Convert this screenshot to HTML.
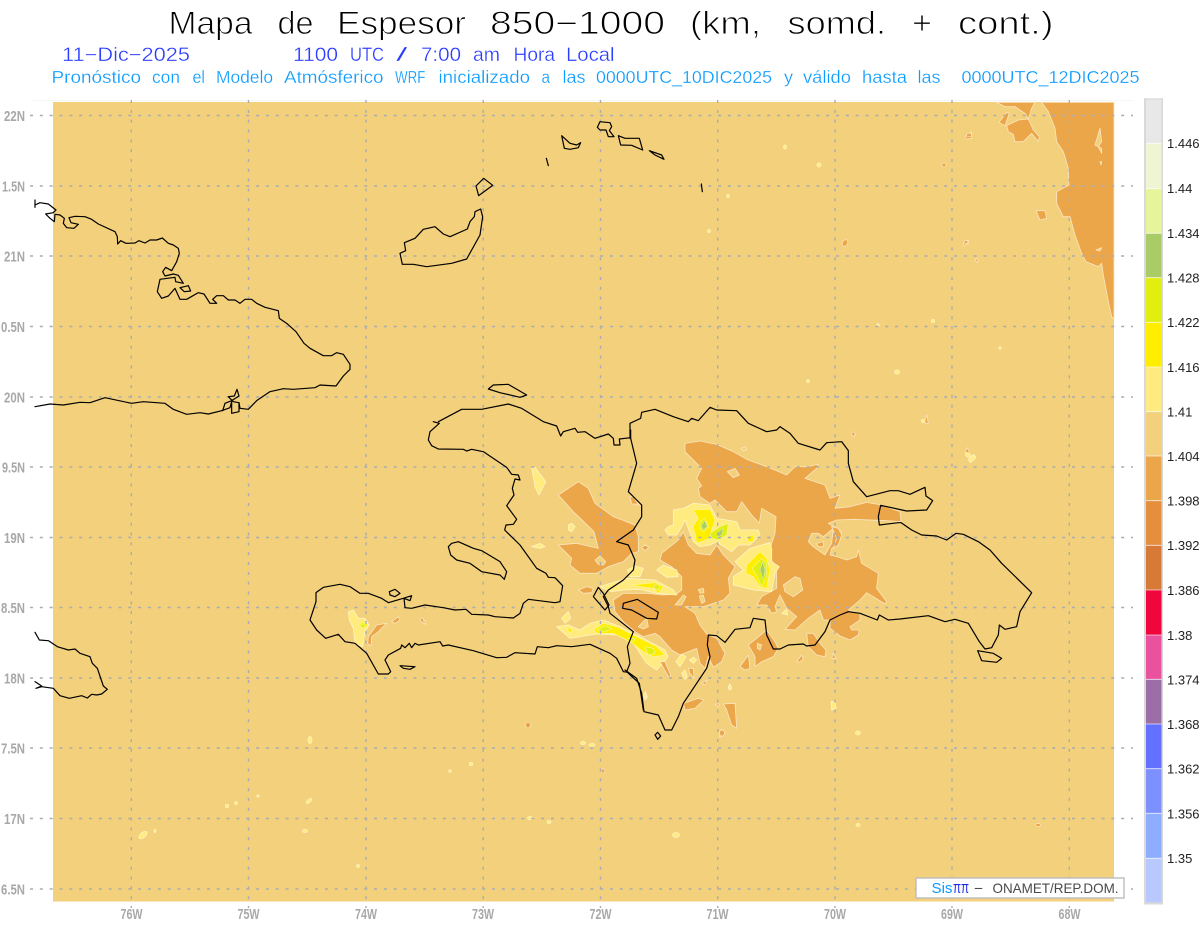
<!DOCTYPE html>
<html lang="es">
<head>
<meta charset="utf-8">
<title>Mapa de Espesor 850-1000</title>
<style>
html,body{margin:0;padding:0;background:#fff;width:1200px;height:927px;overflow:hidden}
svg{display:block;font-family:"Liberation Sans",sans-serif}
.t{font-size:32px;fill:#000;stroke:#fff;stroke-width:.9}
.d{font-size:19px;fill:#2a3cff;stroke:#fff;stroke-width:.3}
.p{font-size:17.5px;fill:#0a9bff;stroke:#fff;stroke-width:.25}
.a{font-size:15px;font-weight:bold;fill:#a8a8a8}
.c{font-size:13px;fill:#222}
.o{fill:#eca64a;stroke:#fbe6c0;stroke-width:2.4;stroke-linejoin:round}
.b{fill:#f3d07b;stroke:#fbe6c0;stroke-width:2.4;stroke-linejoin:round}
.l{fill:#ffeb80;stroke:#fff5c8;stroke-width:2.4;stroke-linejoin:round}
.y{fill:#ffee00;stroke:#fff5a0;stroke-width:1.8;stroke-linejoin:round}
.g{fill:#e0ee10;stroke:#f4f8a0;stroke-width:1.8;stroke-linejoin:round}
.v{fill:#aacc66;stroke:#e8f0b0;stroke-width:1.5;stroke-linejoin:round}
.k{fill:none;stroke:#000;stroke-width:3.6;stroke-linejoin:round;stroke-linecap:round}
.m{stroke:#a9acb0;stroke-width:1.4;stroke-dasharray:3 6.83;fill:none}
</style>
</head>
<body>
<svg width="1200" height="927" viewBox="0 0 1200 927" xmlns="http://www.w3.org/2000/svg">
<rect width="1200" height="927" fill="#fff"/>
<line x1="33" y1="100.5" x2="1133" y2="100.5" stroke="#f5f5f5"/>
<rect x="53" y="102" width="1061" height="799" fill="#f3d07b"/>
<rect x="53" y="901" width="1061" height="1" fill="#fbe6c0"/>

<!-- zoom 10 NE -->
<g transform="translate(960,95) scale(.33333)">
<polygon class="o" points="245,22 265,50 285,100 290,140 310,170 325,220 327,270 290,290 290,325 310,365 330,365 345,420 365,475 378,500 415,515 425,505 430,540 445,620 455,665 462,672 462,22"/>
<polygon class="o" points="110,22 135,35 165,35 195,55 205,72 215,40 225,22"/>
<polygon class="o" points="205,72 220,105 238,125 235,140 215,115 190,140 165,140 160,118 145,110 140,92 175,75"/>
<polygon class="o" points="117,82 140,52 148,55 135,92"/>
<polygon class="b" points="405,150 420,100 425,140 415,155"/>
<polygon class="b" points="415,155 425,160 425,175"/>
<polygon class="b" points="420,200 425,200 423,210"/>
<polygon class="b" points="408,465 425,458 420,468"/>
<polygon class="o" points="228,347 255,347 260,370 240,375"/>
<polygon class="o" points="10,445 25,435 25,445 12,452"/>
<polygon class="o" points="15,125 35,110 35,130 20,132"/>
<polygon class="o" points="45,495 50,490 55,497 50,502"/>
</g>

<!-- zoom 9 main DR fills -->
<g transform="translate(620,400) scale(.33333)">
<path class="o" fill-rule="evenodd" d="M195,130 240,123 290,133 340,155 380,178 440,200 500,225 525,200 565,200 595,192 590,205 555,235 600,250 615,255 630,295 660,285 645,325 690,320 740,307 785,315 840,335 843,365 800,362 700,358 650,360 625,370 665,395 655,435 635,445 630,465 650,470 680,480 710,470 715,450 725,490 775,520 770,565 800,605 795,612 760,590 740,578 720,600 685,630 720,640 720,660 690,680 695,690 718,690 715,705 690,720 660,708 630,685 630,660 610,660 600,630 565,655 525,690 495,688 530,650 500,625 480,585 465,620 470,635 455,640 440,615 410,615 425,590 470,565 470,500 445,470 455,430 465,400 468,350 425,325 418,370 395,345 365,305 350,335 320,335 285,300 270,310 240,290 235,265 245,258 230,235 245,205 195,155Z M322,215 345,205 358,225 340,233Z M565,425 575,400 595,400 610,410 640,385 635,430 615,465 580,440Z M490,555 525,530 540,535 548,570 520,590 495,575Z"/>
<polygon class="o" points="590,430 610,425 610,440 595,440"/>
<polygon class="o" points="635,380 655,385 665,405 655,435 640,445 650,415"/>
<polygon class="l" points="485,640 500,628 503,645"/>
<polygon class="o" points="385,735 410,715 440,690 465,725 475,745 460,770 425,785 405,800 405,770"/>
<polygon class="b" points="412,730 425,735 420,750 412,745"/>
<polygon class="o" points="360,800 385,765 390,805 375,810"/>
<polygon class="o" points="560,700 580,700 600,730 618,750 615,770 590,765 565,740"/>
<polygon class="o" points="530,785 545,765 550,778 535,787"/>
<polygon class="o" points="635,775 640,760 648,775"/>
<polygon class="o" points="190,910 235,895 252,900 225,925 195,930"/>
<polygon class="o" points="310,912 345,910 350,985 335,975 320,930"/>
<polygon class="o" points="298,1010 305,987 315,1000 305,1010"/>
<polygon class="o" points="285,912 300,912 295,920"/>
<polygon class="o" points="245,850 262,840 255,855"/>
<polygon class="o" points="915,60 920,45 925,70 915,70"/>
<polygon class="o" points="1035,155 1042,143 1048,155 1042,165"/>
<polygon class="o" points="693,100 700,95 707,103 700,110"/>
<polygon class="o" points="70,442 77,435 85,442 77,450"/>
<polygon class="l" points="1045,180 1060,163 1068,172 1052,188"/>
<polygon class="l" points="633,905 645,905 648,925 635,930"/>
<polygon class="b" points="325,860 330,855 334,868 327,870"/>
<polygon class="b" points="363,145 375,140 380,148 370,153"/>
</g>

<!-- zoom 5 central fills -->
<g transform="translate(540,430) scale(.33333)">
<polygon class="o" points="55,195 115,155 145,175 165,220 220,260 285,285 295,320 295,365 275,370 250,395 205,410 170,430 120,430 90,405 95,385 55,345 110,340 175,355 162,305 100,245"/>
<polygon class="b" points="165,390 180,378 197,395 190,405 175,403"/>
<polygon class="o" points="115,480 140,470 160,475 155,488 130,490"/>
<polygon class="o" points="270,210 275,200 300,225 290,225"/>
<polygon class="o" points="305,352 315,345 327,352 315,362"/>
<polygon class="o" points="365,370 415,330 430,305 445,345 470,370 510,375 530,345 550,375 585,410 565,445 570,490 550,510 520,520 490,530 435,530 465,550 480,585 500,612 530,625 555,670 545,695 520,712 505,680 495,715 480,700 470,655 420,675 395,660 360,620 345,610 310,620 285,605 250,575 225,545 220,510 250,490 320,490 370,495 410,492 425,480 425,440 395,410 360,390"/>
<polygon class="b" points="295,590 320,565 325,590 310,597"/>
<polygon class="b" points="475,478 490,475 492,488 480,490"/>
<polygon class="b" points="478,498 490,495 495,515 485,520"/>
<polygon class="b" points="405,525 430,495 438,500 425,525"/>
<!-- light yellow -->
<polygon class="l" points="375,300 385,290 400,285 400,240 430,235 460,220 510,225 530,265 590,275 600,300 655,300 660,315 630,345 595,345 575,365 545,345 530,335 510,345 480,350 460,335 435,270 425,290 410,315 385,315"/>
<polygon class="y" points="460,240 510,238 525,270 515,300 510,325 470,340 465,310 458,290 475,265"/>
<polygon class="g" points="480,275 495,265 505,290 490,305 480,295"/>
<polygon class="g" points="510,310 540,290 565,280 560,315 535,330 515,325"/>
<polygon class="v" points="484,287 495,272 502,290 490,300"/>
<polygon class="v" points="530,310 550,295 545,315 535,320"/>
<polygon class="y" points="620,320 640,315 640,335 625,335"/>
<polygon class="l" points="585,395 630,355 665,345 690,338 695,355 695,395 718,410 705,430 695,485 640,480 600,470 580,465 580,440 610,420"/>
<polygon class="y" points="620,405 660,365 680,385 690,420 680,475 660,470 640,440 618,430"/>
<polygon class="g" points="637,415 665,385 680,400 680,440 665,470 650,435"/>
<polygon class="v" points="660,420 668,395 675,420 670,450"/>
<polygon class="l" points="180,470 260,445 345,450 400,480 410,495 350,490 300,478 255,480 215,485 190,475"/>
<polygon class="y" points="275,465 345,458 370,470 355,490 340,475 300,470"/>
<polygon class="g" points="342,465 360,465 355,480 345,478"/>
<polygon class="l" points="262,420 285,408 310,415 300,440 270,440"/>
<polygon class="l" points="350,420 370,405 410,420 415,440 380,442"/>
<polygon class="l" points="50,590 85,585 120,600 150,580 190,570 240,590 310,625 375,660 385,680 350,720 320,700 280,640 230,615 170,612 90,625"/>
<polygon class="y" points="160,600 190,580 230,590 280,615 350,650 375,675 340,680 310,665 270,635 220,610 170,610"/>
<polygon class="g" points="170,600 195,588 215,595 195,605"/>
<polygon class="g" points="315,650 340,655 345,670 325,675"/>
<polygon class="g" points="265,625 285,625 280,635"/>
<polygon class="l" points="65,565 85,545 92,565 75,580"/>
<polygon class="y" points="82,597 90,592 96,605 88,608"/>
<polygon class="l" points="408,695 425,672 438,680 420,710"/>
<polygon class="l" points="448,690 460,682 470,690 460,700"/>
<polygon class="l" points="425,730 435,720 442,740 435,748"/>
<polygon class="o" points="445,715 460,715 462,745 450,730"/>
<polygon class="o" points="360,695 375,695 392,735 388,745"/>
<polygon class="l" points="565,770 570,762 575,775 568,780"/>
<polygon class="l" points="312,800 316,785 322,800 316,810"/>
</g>

<!-- zoom 8 Haiti fills -->
<g transform="translate(300,380) scale(.33333)">
<polygon class="l" points="695,262 705,262 737,305 717,345 705,320"/>
<polygon class="l" points="805,435 815,430 825,440 815,455 805,450"/>
<polygon class="l" points="695,500 720,490 735,500 720,505"/>
<polygon class="l" points="145,695 160,690 175,715 195,715 207,735 195,755 188,800 165,790 160,745 148,720"/>
<polygon class="y" points="175,735 190,725 205,735 190,748"/>
<polygon class="g" points="182,735 195,730 195,742 185,745"/>
<polygon class="o" points="205,770 230,735 260,730 235,755 215,770 213,798 203,790"/>
<polygon class="o" points="275,725 295,710 300,720 285,730"/>
<polygon class="o" points="362,715 370,715 378,733 368,728"/>
<polygon class="o" points="990,350 1000,350 1015,372 995,372"/>
<polygon class="l" points="1030,945 1036,935 1040,948 1034,955"/>
</g>

<!-- small specks -->
<g fill="#ffeb80" stroke="#fff5c8" stroke-width=".7">
<ellipse cx="143" cy="835" rx="5" ry="2.6" transform="rotate(-40 143 835)"/>
<ellipse cx="310" cy="740" rx="2" ry="3.5"/>
<ellipse cx="309" cy="801" rx="3.5" ry="1.5" transform="rotate(-40 309 801)"/>
<ellipse cx="305" cy="831" rx="2.5" ry="1.5"/>
<ellipse cx="583" cy="743" rx="2.5" ry="1.7"/>
<ellipse cx="592" cy="745" rx="3" ry="1.5"/>
<ellipse cx="676" cy="835" rx="3.5" ry="2.5"/>
<ellipse cx="858" cy="825" rx="2" ry="1.5"/>
<ellipse cx="858" cy="733" rx="2.5" ry="2"/>
<ellipse cx="968" cy="455" rx="3" ry="2" transform="rotate(40 968 455)"/>
<ellipse cx="897" cy="372" rx="2.5" ry="2"/>
<ellipse cx="358" cy="866" rx="1.5" ry="1.5"/>
<ellipse cx="236" cy="803" rx="1.5" ry="1.5"/>
<ellipse cx="227" cy="806" rx="1.7" ry="1.7"/>
<ellipse cx="258" cy="796" rx="1.2" ry="1.2"/>
<ellipse cx="530" cy="818" rx="2.5" ry="1.5"/>
<ellipse cx="549" cy="822" rx="2" ry="1.5"/>
<ellipse cx="471" cy="764" rx="1.7" ry="1.7"/>
<ellipse cx="450" cy="771" rx="1.3" ry="1.3"/>
<ellipse cx="155" cy="831" rx="1" ry="1.5"/>
<ellipse cx="785" cy="147" rx="1.5" ry="2"/>
<ellipse cx="819" cy="165" rx="2" ry="2"/>
<ellipse cx="728" cy="196" rx="1.5" ry="1.5"/>
<ellipse cx="709" cy="231" rx="1.5" ry="1.5"/>
<ellipse cx="933" cy="321" rx="1.7" ry="1.7"/>
<ellipse cx="878" cy="325" rx="1.3" ry="1.3"/>
<ellipse cx="808" cy="381" rx="1.5" ry="1.5"/>
<ellipse cx="923" cy="421" rx="1.7" ry="1.7"/>
<ellipse cx="1000" cy="348" rx="1.2" ry="1.2"/>
</g>
<g fill="#eca64a" stroke="#fbe6c0" stroke-width=".7">
<ellipse cx="845" cy="243" rx="2.5" ry="3.5" transform="rotate(30 845 243)"/>
<ellipse cx="966" cy="242" rx="1.8" ry="1.5"/>
<ellipse cx="944" cy="165" rx="2" ry="2"/>
<ellipse cx="969" cy="135" rx="2.5" ry="1.7"/>
<ellipse cx="1038" cy="825" rx="2.5" ry="1.5"/>
<ellipse cx="603" cy="771" rx="1.8" ry="2"/>
<ellipse cx="722" cy="733" rx="2.5" ry="3"/>
<ellipse cx="528" cy="725" rx="2.5" ry="3"/>
<ellipse cx="422" cy="620" rx="1.5" ry="2"/>
</g>

<!-- graticule -->
<g class="m">
<path d="M30 115.5H1133M30 186H1133M30 256H1133M30 326.5H1133M30 397H1133M30 467H1133M30 537.5H1133M30 607.5H1133M30 678H1133M30 748H1133M30 818.5H1133M30 889H1133"/>
<path d="M131.3 100V908M248.5 100V908M366 100V908M483.2 100V908M600.5 100V908M717.7 100V908M835 100V908M952 100V908M1069.3 100V908"/>
</g>

<!-- coast: Cuba -->
<g transform="translate(0,90) scale(.33333)">
<polyline class="k" points="105,330 105,352"/>
<polyline class="k" points="105,345 120,338 145,342 168,360 160,368 137,372 150,385 163,395 165,373 180,375 193,385 190,400 200,413 222,415 235,403 213,398 207,383 225,379 255,380 275,388 295,402 345,425 352,440 353,462 362,452 378,460 405,459 417,452 435,459 450,450 470,450 487,444 505,460 520,465 535,475 538,490 530,515 515,542 497,532 488,545 495,558 520,552 535,556 550,580 527,575 525,562 480,568 472,605 485,625 505,618 525,595 540,628 560,628 595,608 612,612 630,640 650,640 638,628 650,617 670,617 685,630 705,630 720,640 735,628 755,628 770,640 795,652 835,662 838,685 860,700 888,725 912,760 930,775 970,797 995,797 1010,788 1030,793 1050,823 1050,838 1030,858 1008,888 960,885 945,893 880,898 850,896 810,905 770,932 745,958 720,955 717,938 700,935 685,920 703,918 711,898 717,918 695,932 675,940 668,962"/>
<polyline class="k" points="105,950 150,942 190,945 240,937 270,938 315,923 395,940 430,935 495,940 520,958 560,973 600,968 625,972 665,962 690,953 695,935 695,970 717,965 717,938"/>
<polygon class="k" points="540,593 565,587 572,603 553,605"/>
</g>
<!-- Jamaica -->
<g transform="translate(0,600) scale(.33333)">
<polyline class="k" points="105,97 118,120 145,122 172,140 205,150 225,147 240,160 270,170 277,190 292,205 310,258 322,268 305,282 290,285 275,283 262,294 245,287 208,295 180,287 160,265 125,260 108,265 125,258 105,245"/>
</g>
<!-- Bahamas -->
<g transform="translate(380,110) scale(.33333)">
<polygon class="k" points="67,463 60,430 77,422 73,398 105,385 130,358 165,350 190,372 210,380 262,357 270,335 283,320 285,305 302,297 308,320 300,375 260,447 215,460 140,470 100,463"/>
<polygon class="k" points="288,228 311,205 338,226 296,257"/>
<polygon class="k" points="545,77 570,100 590,105 602,98 595,113 570,118 553,115"/>
<polyline class="k" points="499,145 505,167"/>
<polygon class="k" points="652,52 660,35 690,38 695,50 688,62 702,80 685,80 678,60 660,60"/>
<polygon class="k" points="715,77 735,85 778,85 788,120 755,106 722,105"/>
<polygon class="k" points="808,122 845,135 852,148 825,135"/>
<polyline class="k" points="964,222 967,245"/>
</g>
<!-- Haiti -->
<g transform="translate(300,380) scale(.33333)">
<polygon class="k" points="565,27 580,15 625,13 680,45 660,52 600,38"/>
<polyline class="k" points="400,125 418,130 390,155 385,180 395,197 415,207 490,208 500,213 515,208 550,215 580,235 620,262 635,283 655,285 660,300 645,297 637,325 642,345 620,377 650,418 640,433 618,435 614,450 660,495 710,565 738,580 745,592 765,593 788,617 780,665 765,668 685,658 670,670 660,700 640,714 585,710 565,705 515,703 498,688 465,690 430,683 375,675 335,685 315,683 312,655 330,662 335,647 310,655 265,668 245,655 205,640 180,640 150,620 120,613 70,622 48,638 48,665 30,720 50,750 77,775 115,763 135,785 165,790 200,820 235,882 265,882 272,875 255,840 265,825 302,805 305,795 315,803 328,790 335,803 345,790 355,795 420,785 428,798 445,795 520,812 590,833 620,832 645,818 705,822 712,800 745,803 770,797 815,800 870,793 930,820 950,835 970,875 985,877"/>
<polyline class="k" points="415,125 485,88 545,88 625,72 665,85 730,125 770,138 782,168 790,155 825,145 833,157 855,155 885,175 925,162 940,175 942,195 960,195 958,177 992,173"/>
<polygon class="k" points="445,500 455,490 475,485 520,505 545,512 600,545 620,575 613,598 600,585 545,575 510,550 470,540 452,525"/>
<polygon class="k" points="268,635 285,628 300,640 285,650 270,645"/>
<polygon class="k" points="300,857 345,860 330,868 310,865"/>
</g>
<!-- border + lakes -->
<g transform="translate(540,430) scale(.33333)">
<polyline class="k" points="272,0 272,25 290,100 265,185 305,225 305,260 280,300 230,335 265,345 285,390 280,420 250,450 205,480 190,500 205,530 210,550 280,605 262,650 270,700 260,725 298,760 310,840"/>
<polygon class="k" points="175,472 160,500 195,540 207,525 190,490"/>
<polygon class="k" points="250,520 292,508 355,547 350,567 320,565 275,540 248,535"/>
</g>
<!-- DR -->
<g transform="translate(620,400) scale(.33333)">
<polyline class="k" points="30,115 30,70 62,55 65,37 105,28 160,50 205,65 215,55 235,62 270,22 290,30 350,32 385,70 440,95 470,90 480,80 510,100 535,130 600,150 620,128 665,125 685,152 685,190 700,245 740,290 810,272 835,272 870,283 915,262 918,288 938,302 920,330 860,333 782,316 775,350 778,375 835,368 843,368 875,390 905,405 950,408 980,420 1008,400 1030,403 1075,425 1110,450 1145,490 1235,578 1200,635 1190,680 1155,688 1138,675 1135,705 1115,743 1095,747 1078,725 1045,670 1005,658 975,665 925,647 840,657 805,660 778,645 772,660 720,640 685,635 660,645 630,660 615,695 585,735 560,738 550,732 505,735 480,747 460,747 440,705 435,660 400,655 390,683 345,688 315,727 290,707 265,705 262,735 270,770 260,805 190,910 175,950 155,990 135,990 115,945 72,935 65,880 50,835 15,810"/>
<polygon class="k" points="105,1005 113,997 122,1008 113,1018"/>
<polygon class="k" points="1073,752 1120,760 1145,775 1130,787 1085,782"/>
</g>

<!-- Titles -->
<g class="t">
<text x="168.5" y="34" textLength="84" lengthAdjust="spacingAndGlyphs">Mapa</text>
<text x="277.5" y="34" textLength="36" lengthAdjust="spacingAndGlyphs">de</text>
<text x="337" y="34" textLength="129" lengthAdjust="spacingAndGlyphs">Espesor</text>
<text x="490" y="34" textLength="175" lengthAdjust="spacingAndGlyphs">850−1000</text>
<text x="690" y="34" textLength="71" lengthAdjust="spacingAndGlyphs">(km,</text>
<text x="787.5" y="34" textLength="98.5" lengthAdjust="spacingAndGlyphs">somd.</text>
<text x="912" y="34" textLength="20" lengthAdjust="spacingAndGlyphs">+</text>
<text x="958" y="34" textLength="95.5" lengthAdjust="spacingAndGlyphs">cont.)</text>
</g>
<g class="d">
<text x="62" y="61" textLength="128" lengthAdjust="spacingAndGlyphs">11−Dic−2025</text>
<text x="293" y="61" textLength="45" lengthAdjust="spacingAndGlyphs">1100</text>
<text x="350" y="61" textLength="34" lengthAdjust="spacingAndGlyphs">UTC</text>
<text x="396" y="61" textLength="11.5" lengthAdjust="spacingAndGlyphs">/</text>
<text x="421" y="61" textLength="40" lengthAdjust="spacingAndGlyphs">7:00</text>
<text x="473" y="61" textLength="27" lengthAdjust="spacingAndGlyphs">am</text>
<text x="513.5" y="61" textLength="41.5" lengthAdjust="spacingAndGlyphs">Hora</text>
<text x="566" y="61" textLength="48.5" lengthAdjust="spacingAndGlyphs">Local</text>
</g>
<g class="p">
<text x="51.5" y="83" textLength="89.5" lengthAdjust="spacingAndGlyphs">Pronóstico</text>
<text x="152" y="83" textLength="28" lengthAdjust="spacingAndGlyphs">con</text>
<text x="192.5" y="83" textLength="12.5" lengthAdjust="spacingAndGlyphs">el</text>
<text x="216" y="83" textLength="57" lengthAdjust="spacingAndGlyphs">Modelo</text>
<text x="284" y="83" textLength="99.5" lengthAdjust="spacingAndGlyphs">Atmósferico</text>
<text x="395" y="83" textLength="30.5" lengthAdjust="spacingAndGlyphs">WRF</text>
<text x="438.5" y="83" textLength="91.5" lengthAdjust="spacingAndGlyphs">inicializado</text>
<text x="541.5" y="83" textLength="8.5" lengthAdjust="spacingAndGlyphs">a</text>
<text x="562.5" y="83" textLength="23" lengthAdjust="spacingAndGlyphs">las</text>
<text x="596" y="83" textLength="176" lengthAdjust="spacingAndGlyphs">0000UTC_10DIC2025</text>
<text x="784" y="83" textLength="9" lengthAdjust="spacingAndGlyphs">y</text>
<text x="803" y="83" textLength="48" lengthAdjust="spacingAndGlyphs">válido</text>
<text x="862" y="83" textLength="45" lengthAdjust="spacingAndGlyphs">hasta</text>
<text x="917.5" y="83" textLength="23" lengthAdjust="spacingAndGlyphs">las</text>
<text x="961.5" y="83" textLength="178" lengthAdjust="spacingAndGlyphs">0000UTC_12DIC2025</text>
</g>

<!-- Axis labels -->
<g class="a">
<text x="4" y="121" textLength="21" lengthAdjust="spacingAndGlyphs">22N</text>
<text x="2" y="191.5" textLength="23" lengthAdjust="spacingAndGlyphs">1.5N</text>
<text x="4" y="261.5" textLength="21" lengthAdjust="spacingAndGlyphs">21N</text>
<text x="1" y="332" textLength="24" lengthAdjust="spacingAndGlyphs">0.5N</text>
<text x="4" y="402.5" textLength="21" lengthAdjust="spacingAndGlyphs">20N</text>
<text x="2" y="472.5" textLength="23" lengthAdjust="spacingAndGlyphs">9.5N</text>
<text x="4" y="543" textLength="21" lengthAdjust="spacingAndGlyphs">19N</text>
<text x="1" y="613" textLength="24" lengthAdjust="spacingAndGlyphs">8.5N</text>
<text x="4" y="683.5" textLength="21" lengthAdjust="spacingAndGlyphs">18N</text>
<text x="1" y="753.5" textLength="24" lengthAdjust="spacingAndGlyphs">7.5N</text>
<text x="4" y="824" textLength="21" lengthAdjust="spacingAndGlyphs">17N</text>
<text x="1" y="894.5" textLength="24" lengthAdjust="spacingAndGlyphs">6.5N</text>
</g>
<g class="a">
<text x="120.5" y="919" textLength="22" lengthAdjust="spacingAndGlyphs">76W</text>
<text x="237.5" y="919" textLength="22" lengthAdjust="spacingAndGlyphs">75W</text>
<text x="355" y="919" textLength="22" lengthAdjust="spacingAndGlyphs">74W</text>
<text x="472" y="919" textLength="22" lengthAdjust="spacingAndGlyphs">73W</text>
<text x="589.5" y="919" textLength="22" lengthAdjust="spacingAndGlyphs">72W</text>
<text x="706.5" y="919" textLength="22" lengthAdjust="spacingAndGlyphs">71W</text>
<text x="824" y="919" textLength="22" lengthAdjust="spacingAndGlyphs">70W</text>
<text x="941" y="919" textLength="22" lengthAdjust="spacingAndGlyphs">69W</text>
<text x="1058.5" y="919" textLength="22" lengthAdjust="spacingAndGlyphs">68W</text>
</g>

<!-- Credit box -->
<rect x="916" y="878" width="208" height="20" fill="#fff" stroke="#bdbdbd" stroke-width="1.4"/>
<text x="931.5" y="893" font-size="15" fill="#0a9bff" textLength="21" lengthAdjust="spacingAndGlyphs">Sis</text>
<text x="953" y="893" font-size="17" fill="#1f2cf0" textLength="16" lengthAdjust="spacingAndGlyphs">ππ</text>
<text x="974" y="893" font-size="14" fill="#444" textLength="9" lengthAdjust="spacingAndGlyphs">−</text>
<text x="992.5" y="893" font-size="14" fill="#4a4a4a" textLength="126" lengthAdjust="spacingAndGlyphs">ONAMET/REP.DOM.</text>

<!-- Colorbar -->
<rect x="1144" y="98" width="19" height="806.5" fill="#d9d9d9"/>
<rect x="1144.5" y="98" width="18" height="1" fill="#e4e4e4"/>
<g>
<rect x="1146" y="99.5" width="15.5" height="43.8" fill="#e8e8e8"/>
<rect x="1146" y="143.3" width="15.5" height="45.4" fill="#eff4d2"/>
<rect x="1146" y="188.7" width="15.5" height="44.6" fill="#e6f49c"/>
<rect x="1146" y="233.3" width="15.5" height="44.4" fill="#aacc66"/>
<rect x="1146" y="277.7" width="15.5" height="44.6" fill="#e0ee10"/>
<rect x="1146" y="322.3" width="15.5" height="44.7" fill="#ffee00"/>
<rect x="1146" y="367" width="15.5" height="44.7" fill="#ffeb80"/>
<rect x="1146" y="411.7" width="15.5" height="44.3" fill="#f3d07b"/>
<rect x="1146" y="456" width="15.5" height="44.7" fill="#eca64a"/>
<rect x="1146" y="500.7" width="15.5" height="44.6" fill="#e58e3c"/>
<rect x="1146" y="545.3" width="15.5" height="44.7" fill="#d77a38"/>
<rect x="1146" y="590" width="15.5" height="45" fill="#f0053c"/>
<rect x="1146" y="635" width="15.5" height="44.3" fill="#ea529f"/>
<rect x="1146" y="679.3" width="15.5" height="44.7" fill="#9c6ea8"/>
<rect x="1146" y="724" width="15.5" height="44.7" fill="#6470ff"/>
<rect x="1146" y="768.7" width="15.5" height="44.6" fill="#7c90ff"/>
<rect x="1146" y="813.3" width="15.5" height="45" fill="#8fadff"/>
<rect x="1146" y="858.3" width="15.5" height="44" fill="#b7c9ff"/>
</g>
<path d="M1146 143.3h15.5M1146 188.7h15.5M1146 233.3h15.5M1146 277.7h15.5M1146 322.3h15.5M1146 367h15.5M1146 411.7h15.5M1146 456h15.5M1146 500.7h15.5M1146 545.3h15.5M1146 590h15.5M1146 635h15.5M1146 679.3h15.5M1146 724h15.5M1146 768.7h15.5M1146 813.3h15.5M1146 858.3h15.5" stroke="#fff" stroke-opacity=".8" stroke-width=".8"/>
<g class="c">
<text x="1167" y="148">1.446</text>
<text x="1167" y="193">1.44</text>
<text x="1167" y="238">1.434</text>
<text x="1167" y="282.5">1.428</text>
<text x="1167" y="327">1.422</text>
<text x="1167" y="372">1.416</text>
<text x="1167" y="416.5">1.41</text>
<text x="1167" y="461">1.404</text>
<text x="1167" y="505.5">1.398</text>
<text x="1167" y="550">1.392</text>
<text x="1167" y="595">1.386</text>
<text x="1167" y="640">1.38</text>
<text x="1167" y="684.5">1.374</text>
<text x="1167" y="729">1.368</text>
<text x="1167" y="773.5">1.362</text>
<text x="1167" y="818.5">1.356</text>
<text x="1167" y="863">1.35</text>
</g>
</svg>
</body>
</html>
